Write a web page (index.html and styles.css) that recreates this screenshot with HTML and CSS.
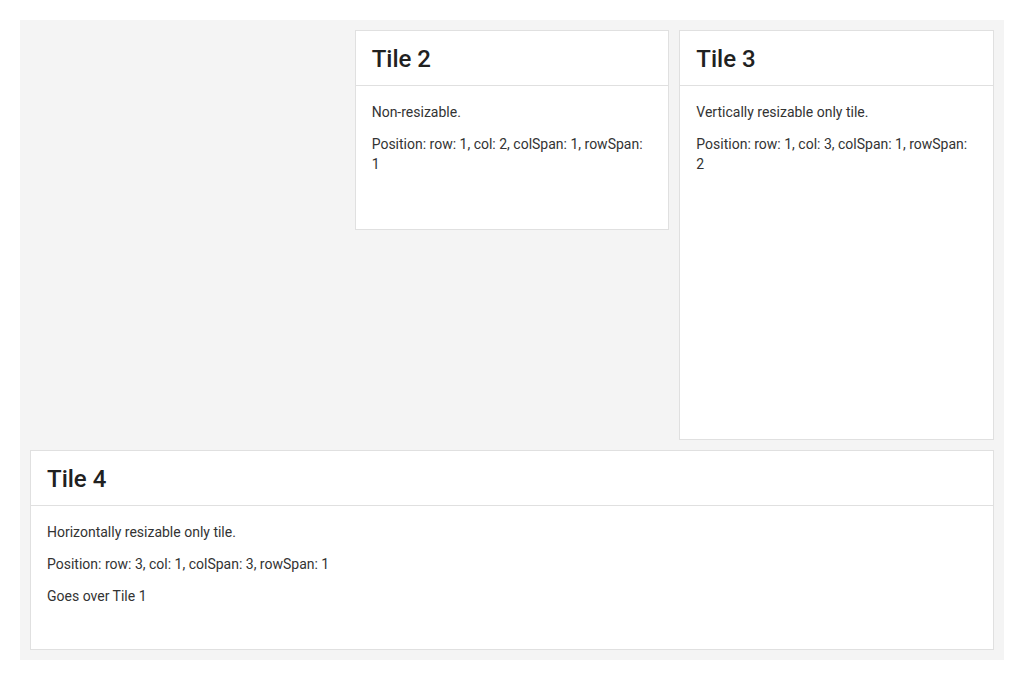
FILE: index.html
```html
<!DOCTYPE html>
<html>
<head>
<meta charset="utf-8">
<link rel="stylesheet" href="styles.css">
</head>
<body>
<div class="layout">
  <div class="tile tile2">
    <div class="tile-header"><h2 class="tile-title">Tile 2</h2></div>
    <div class="tile-body">
      <p>Non-resizable.</p>
      <p>Position: row: 1, col: 2, colSpan: 1, rowSpan: 1</p>
    </div>
  </div>
  <div class="tile tile3">
    <div class="tile-header"><h2 class="tile-title">Tile 3</h2></div>
    <div class="tile-body">
      <p>Vertically resizable only tile.</p>
      <p>Position: row: 1, col: 3, colSpan: 1, rowSpan: 2</p>
    </div>
  </div>
  <div class="tile tile4">
    <div class="tile-header"><h2 class="tile-title">Tile 4</h2></div>
    <div class="tile-body">
      <p>Horizontally resizable only tile.</p>
      <p>Position: row: 3, col: 1, colSpan: 3, rowSpan: 1</p>
      <p>Goes over Tile 1</p>
    </div>
  </div>
</div>
</body>
</html>
```
FILE: styles.css
```css
html, body {
  margin: 0;
  padding: 0;
  background: #ffffff;
}
body {
  padding: 20px;
  font-family: Roboto, "Liberation Sans", sans-serif;
  color: rgba(0, 0, 0, 0.87);
}
.layout {
  box-sizing: border-box;
  width: 984px;
  height: 640px;
  background: #f4f4f4;
  padding: 10px;
  display: grid;
  grid-template-columns: repeat(3, 1fr);
  grid-template-rows: repeat(3, 1fr);
  gap: 10px;
}
.tile {
  background: #ffffff;
  border: 1px solid #e0e0e0;
  display: flex;
  flex-direction: column;
  overflow: hidden;
}
.tile2 { grid-column: 2; grid-row: 1; }
.tile3 { grid-column: 3; grid-row: 1 / span 2; }
.tile4 { grid-column: 1 / span 3; grid-row: 3; }
.tile-header {
  padding: 13px 16px 11px 16px;
  border-bottom: 1px solid #e0e0e0;
}
.tile-title {
  margin: 0;
  font-size: 24px;
  line-height: 30px;
  font-weight: 500;
  color: #212121;
}
.tile-body {
  padding: 16px 16px;
  font-size: 14px;
  line-height: 20px;
  color: #333333;
}
.tile-body p {
  margin: 0 0 12px 0;
}
```
